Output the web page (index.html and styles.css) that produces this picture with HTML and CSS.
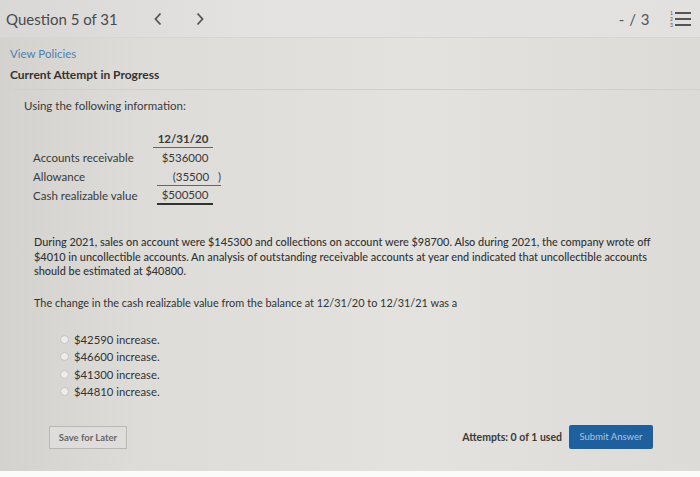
FILE: index.html
```html
<!DOCTYPE html>
<html>
<head>
<meta charset="utf-8">
<link rel="stylesheet" href="styles.css">
</head>
<body>
<div class="page">
  <header class="topbar">
    <div class="qnav">
      <span class="qtitle">Question 5 of 31</span>
      <svg class="chev" width="10" height="14" viewBox="0 0 10 14"><path d="M7.5 1.5 L2.5 7 L7.5 12.5" fill="none" stroke="#555" stroke-width="1.8"/></svg>
      <svg class="chev next" width="10" height="14" viewBox="0 0 10 14"><path d="M2.5 1.5 L7.5 7 L2.5 12.5" fill="none" stroke="#555" stroke-width="1.8"/></svg>
    </div>
    <div class="qright">
      <span class="score">- / 3</span>
      <svg class="listicon" width="22" height="18" viewBox="0 0 22 18">
        <text x="0" y="5" class="num">1</text>
        <text x="0" y="11" class="num">2</text>
        <text x="0" y="17" class="num">3</text>
        <rect x="5" y="2" width="16" height="2" fill="#555"/>
        <rect x="5" y="8" width="16" height="2" fill="#555"/>
        <rect x="5" y="14" width="16" height="2" fill="#555"/>
      </svg>
    </div>
  </header>
  <div class="meta">
    <a class="policies">View Policies</a>
    <div class="attempt">Current Attempt in Progress</div>
  </div>
  <section class="panel">
    <p class="intro">Using the following information:</p>
    <div class="table">
      <div class="row head"><span class="lab"></span><span class="val hd">12/31/20</span></div>
      <div class="row"><span class="lab">Accounts receivable</span><span class="val">$536000</span></div>
      <div class="row"><span class="lab">Allowance</span><span class="val ul">(35500&nbsp;&nbsp;&nbsp;)</span></div>
      <div class="row"><span class="lab">Cash realizable value</span><span class="val dbl">$500500</span></div>
    </div>
    <p class="para">During 2021, sales on account were $145300 and collections on account were $98700. Also during 2021, the company wrote off $4010 in uncollectible accounts. An analysis of outstanding receivable accounts at year end indicated that uncollectible accounts should be estimated at $40800.</p>
    <p class="question">The change in the cash realizable value from the balance at 12/31/20 to 12/31/21 was a</p>
    <ul class="options">
      <li><span class="radio"></span>$42590 increase.</li>
      <li><span class="radio"></span>$46600 increase.</li>
      <li><span class="radio"></span>$41300 increase.</li>
      <li><span class="radio"></span>$44810 increase.</li>
    </ul>
    <div class="actions">
      <button class="save">Save for Later</button>
      <div class="submitgroup">
        <span class="attempts">Attempts: 0 of 1 used</span>
        <button class="submit">Submit Answer</button>
      </div>
    </div>
  </section>
</div>
</body>
</html>
```
FILE: styles.css
```css
html, body {
  margin: 0;
  padding: 0;
}
body {
  width: 700px;
  height: 477px;
  overflow: hidden;
  background: #fbfbfa;
  font-family: Lato, "Open Sans", sans-serif;
  color: #333;
}
.page {
  height: 471px;
  background: linear-gradient(90deg, #d3d2cf 0%, #dddcd9 20%, #e3e2df 60%, #dcdbd8 100%);
}
.topbar {
  height: 37px;
  display: flex;
  align-items: center;
  justify-content: space-between;
  padding: 0 8px 0 6px;
  border-bottom: 1px solid #d6d5d2;
  background: linear-gradient(90deg, #d9d8d6, #e4e3e1 40%, #e2e1df);
}
.qnav {
  display: flex;
  align-items: center;
}
.qtitle {
  font-size: 15px;
  color: #4a4a4a;
}
.chev {
  margin-left: 35px;
}
.chev.next {
  margin-left: 32px;
}
.qright {
  display: flex;
  align-items: center;
  gap: 20px;
}
.score {
  font-size: 15px;
  color: #555;
  letter-spacing: 0.5px;
}
.listicon .num {
  font-size: 5px;
  fill: #555;
  font-family: Lato, sans-serif;
}
.meta {
  padding: 8px 10px 0 10px;
}
.policies {
  display: block;
  font-size: 11.5px;
  color: #4f7fae;
  line-height: 16px;
}
.attempt {
  font-size: 12px;
  font-weight: 700;
  color: #333;
  margin-top: 5px;
  line-height: 16px;
}
.panel {
  margin: 6px 0 0 12px;
  border-top: 1px solid #d0cfcc;
  border-left: 1px solid #d6d5d2;
  padding: 8px 0 0 11px;
  height: 374px;
  box-sizing: border-box;
  display: flex;
  flex-direction: column;
}
.intro {
  margin: 0;
  font-size: 11.5px;
  line-height: 16px;
  color: #3a3a3a;
}
.table {
  margin: 15px 0 0 9px;
  font-size: 11.5px;
  color: #3a3a3a;
}
.row {
  display: flex;
  align-items: center;
  height: 19px;
}
.lab {
  width: 124px;
}
.val {
  width: 56px;
  text-align: center;
  line-height: 17px;
}
.val.hd {
  font-weight: 700;
  width: 60px;
  margin-left: -4px;
  border-bottom: 1.5px solid #666;
}
.val.ul {
  border-bottom: 1.5px solid #666;
  text-align: right;
  width: 64px;
  margin-left: -4px;
  box-sizing: border-box;
  position: relative;
  left: 4px;
}
.val.dbl {
  border-bottom: 2px solid #333;
}
.para {
  margin: 30px 0 0 10px;
  width: 630px;
  font-size: 10.9px;
  line-height: 14.5px;
  color: #333;
  font-weight: 500;
}
.question {
  margin: 17px 0 0 10px;
  font-size: 10.9px;
  line-height: 14px;
  color: #333;
}
.options {
  list-style: none;
  margin: 21px 0 0 36px;
  padding: 0;
  font-size: 11.3px;
  color: #333;
}
.options li {
  display: flex;
  align-items: center;
  height: 17.5px;
  gap: 5px;
}
.radio {
  width: 7px;
  height: 7px;
  border: 1px solid #c4c4c2;
  border-radius: 50%;
  background: #ececea;
}
.actions {
  margin-top: auto;
  margin-bottom: 14px;
  display: flex;
  align-items: center;
  justify-content: space-between;
  padding: 0 47px 0 25px;
}
.save {
  width: 78px;
  height: 23px;
  border: 1px solid #b9b8b5;
  background: #dedddb;
  color: #666;
  font-family: Lato, sans-serif;
  font-size: 9.5px;
  font-weight: 700;
  padding: 0;
  margin-top: 2px;
}
.submitgroup {
  display: flex;
  align-items: center;
  gap: 7px;
}
.attempts {
  font-size: 10.5px;
  font-weight: 700;
  color: #3a3a3a;
}
.submit {
  width: 84px;
  height: 24px;
  border: none;
  border-radius: 2px;
  background: #1e5f9e;
  color: #a9c6e4;
  font-family: Lato, sans-serif;
  font-size: 9.5px;
  padding: 0;
}
```
